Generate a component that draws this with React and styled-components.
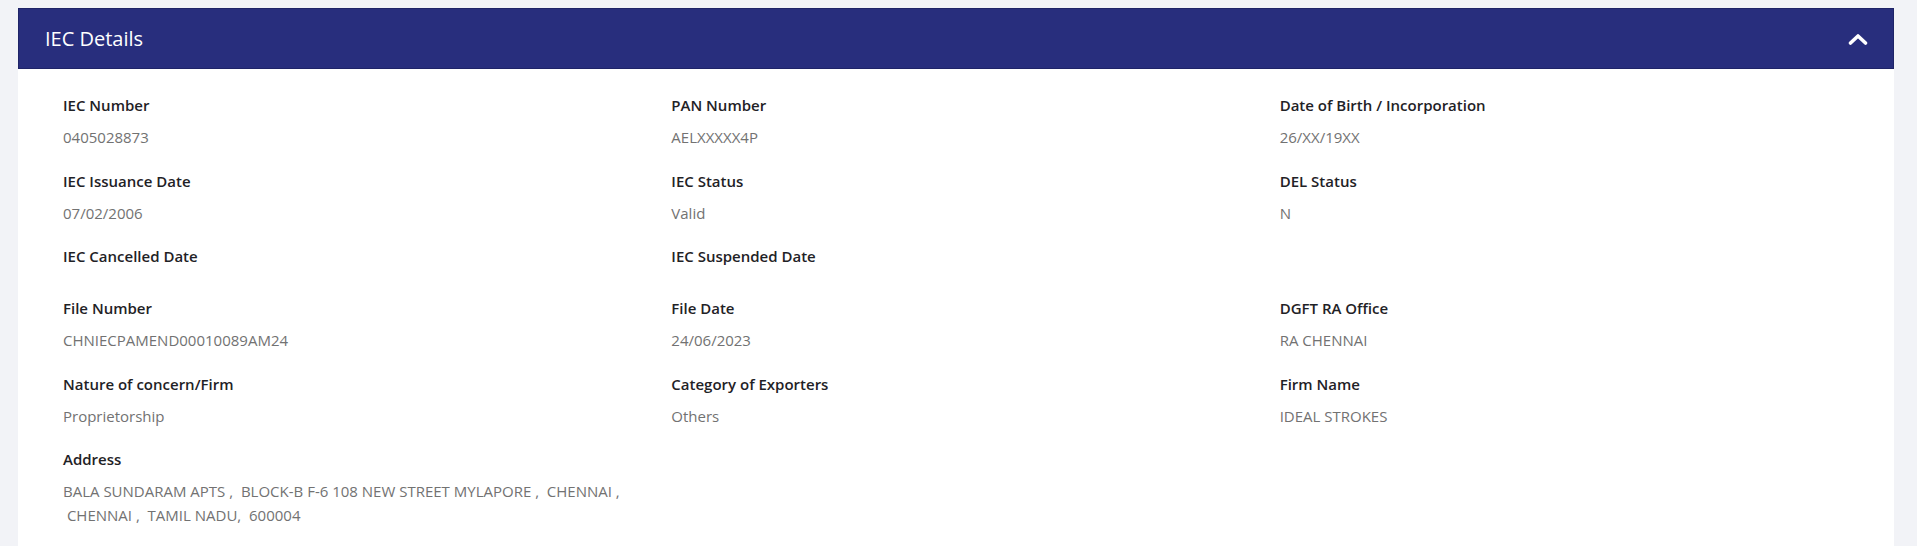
import React from "react";
import styled, { createGlobalStyle } from "styled-components";

const GlobalStyle = createGlobalStyle`
    html, body {
        margin: 0;
        padding: 0;
        background: #f2f3f7;
        font-family: "Open Sans", "Noto Sans", Arial, sans-serif;
    }
`;

const Page = styled.div`
    padding: 8px 23px 0 18px;
    min-height: 546px;
    box-sizing: border-box;
`;

const Card = styled.section`
    background: #ffffff;
    min-height: 538px;
`;

const CardHeader = styled.div`
    display: flex;
    align-items: center;
    justify-content: space-between;
    height: 61px;
    padding: 0 25px 0 26px;
    background: #282e7d;
    border: 1px solid #1f2467;
    box-sizing: border-box;
`;

const Title = styled.h2`
    margin: 0;
    font-size: 20px;
    font-weight: 400;
    color: #ffffff;
`;

const Toggle = styled.button`
    display: flex;
    align-items: center;
    padding: 0;
    border: none;
    background: transparent;
    cursor: pointer;
`;

const CardBody = styled.div`
    display: grid;
    grid-template-columns: repeat(3, 1fr);
    padding: 25px 6px 0 45px;
`;

const Field = styled.div`
    padding-right: 30px;
    margin-bottom: 20px;
`;

const Label = styled.div`
    font-size: 15px;
    font-weight: 600;
    line-height: 22px;
    color: #1f2226;
    margin-bottom: 10px;
`;

const Value = styled.div`
    font-size: 15px;
    line-height: 23.5px;
    color: #727272;
`;

const fields = [
    ["IEC Number", "0405028873"],
    ["PAN Number", "AELXXXXX4P"],
    ["Date of Birth / Incorporation", "26/XX/19XX"],
    ["IEC Issuance Date", "07/02/2006"],
    ["IEC Status", "Valid"],
    ["DEL Status", "N"],
    ["IEC Cancelled Date", ""],
    ["IEC Suspended Date", ""],
    ["", ""],
    ["File Number", "CHNIECPAMEND00010089AM24"],
    ["File Date", "24/06/2023"],
    ["DGFT RA Office", "RA CHENNAI"],
    ["Nature of concern/Firm", "Proprietorship"],
    ["Category of Exporters", "Others"],
    ["Firm Name", "IDEAL STROKES"],
];

// double spaces in the source data: keep the second one glued to the next word
const address =
    "BALA SUNDARAM APTS , \u00a0BLOCK-B F-6 108 NEW STREET MYLAPORE , \u00a0CHENNAI , \u00a0CHENNAI , \u00a0TAMIL NADU, \u00a0600004";

const ChevronUp = () => (
    <svg width="20" height="12" viewBox="0 0 20 12">
        <polyline
            points="2.5,10 10,3 17.5,10"
            fill="none"
            stroke="#ffffff"
            strokeWidth="3.6"
            strokeLinecap="round"
            strokeLinejoin="round"
        />
    </svg>
);

export default function App() {
    return (
        <>
            <GlobalStyle />
            <Page>
                <Card>
                    <CardHeader>
                        <Title>IEC Details</Title>
                        <Toggle aria-label="Collapse">
                            <ChevronUp />
                        </Toggle>
                    </CardHeader>
                    <CardBody>
                        {fields.map(([label, value], i) => (
                            <Field key={i}>
                                {label && <Label>{label}</Label>}
                                {value && <Value>{value}</Value>}
                            </Field>
                        ))}
                        <Field>
                            <Label>Address</Label>
                            <Value>{address}</Value>
                        </Field>
                    </CardBody>
                </Card>
            </Page>
        </>
    );
}
